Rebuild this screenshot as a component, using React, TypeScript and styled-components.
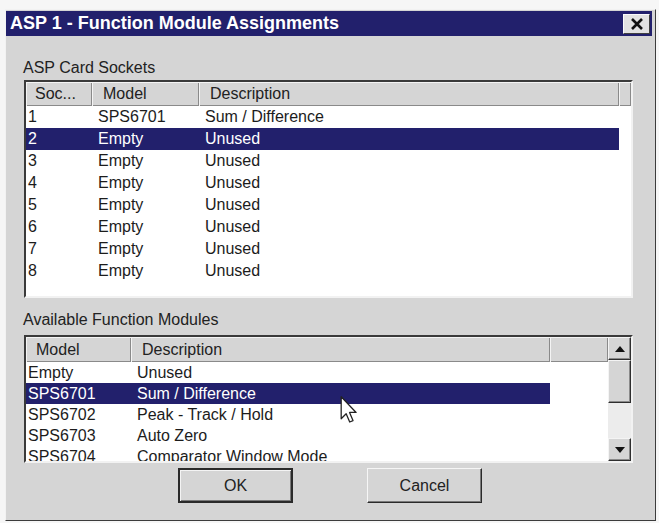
import React from 'react'
import styled, { createGlobalStyle } from 'styled-components'

const NAVY = '#22206c'
const FACE = '#d5d5d5'

const GlobalStyle = createGlobalStyle`
  html, body {
    margin: 0;
    padding: 0;
    background: #f6f6f6;
  }
  body {
    font-family: 'Liberation Sans', Arial, sans-serif;
  }
`

const Window = styled.div`
  box-sizing: border-box;
  width: 651px;
  height: 512px;
  margin: 9px 0 0 5px;
  background: ${FACE};
  border: 1px solid;
  border-color: #f2f2f2 #3c3c3c #3c3c3c #f2f2f2;
  padding: 1px 3px 0 0;
  display: flex;
  flex-direction: column;
`

const TitleBar = styled.div`
  height: 25px;
  flex-shrink: 0;
  display: flex;
  align-items: center;
  justify-content: space-between;
  background: ${NAVY};
  color: #fff;
  font-weight: bold;
  font-size: 18px;
  padding-left: 4px;
`

const CloseButton = styled.div`
  box-sizing: border-box;
  width: 27px;
  height: 20px;
  margin-right: 2px;
  display: flex;
  align-items: center;
  justify-content: center;
  background: #e2e2e2;
  border: 1px solid;
  border-color: #fafafa #404040 #404040 #fafafa;
`

const Body = styled.div`
  display: flex;
  flex-direction: column;
  padding: 0 19px 0 18px;
`

const GroupLabel = styled.div<{ $gap: number }>`
  margin-top: ${(p) => p.$gap}px;
  margin-left: -1px;
  font-size: 16px;
  line-height: 18px;
  color: #222;
`

const ListBox = styled.div<{ $height: number; $gap: number }>`
  position: relative;
  box-sizing: border-box;
  height: ${(p) => p.$height}px;
  margin-top: ${(p) => p.$gap}px;
  background: #fff;
  border: 2px solid;
  border-color: #3a3a3a #f2f2f2 #f2f2f2 #3a3a3a;
  overflow: hidden;
  display: flex;
`

const ListContent = styled.div`
  flex: 1;
  min-width: 0;
  display: flex;
  flex-direction: column;
`

const Header = styled.div<{ $height: number }>`
  display: flex;
  flex-shrink: 0;
  height: ${(p) => p.$height}px;
  background: ${FACE};
`

const HeaderCell = styled.div<{ $width?: number; $pad?: number }>`
  box-sizing: border-box;
  ${(p) => (p.$width ? `width: ${p.$width}px;` : 'flex: 1;')}
  padding-left: ${(p) => p.$pad ?? 11}px;
  display: flex;
  align-items: center;
  font-size: 16px;
  color: #222;
  white-space: nowrap;
  overflow: hidden;
  box-shadow: inset 1px 1px #f4f4f4, inset -1px -1px #8a8a8a;
`

const Row = styled.div<{ $height: number; $selected?: boolean }>`
  display: flex;
  flex-shrink: 0;
  align-self: flex-start;
  height: ${(p) => p.$height}px;
  line-height: ${(p) => p.$height}px;
  font-size: 16px;
  background: ${(p) => (p.$selected ? NAVY : 'transparent')};
  color: ${(p) => (p.$selected ? '#fff' : '#1c1c1c')};
`

const Cell = styled.div<{ $width: number; $first?: boolean }>`
  box-sizing: border-box;
  width: ${(p) => p.$width}px;
  padding-left: ${(p) => (p.$first ? 2 : 6)}px;
  white-space: nowrap;
  overflow: hidden;
`

const ScrollBar = styled.div`
  width: 23px;
  flex-shrink: 0;
  display: flex;
  flex-direction: column;
  background: #ececec;
`

const ScrollPart = styled.div<{ $height: number }>`
  box-sizing: border-box;
  height: ${(p) => p.$height}px;
  display: flex;
  align-items: center;
  justify-content: center;
  background: ${FACE};
  border: 1px solid;
  border-color: #f4f4f4 #2e2e2e #2e2e2e #f4f4f4;
  box-shadow: inset -1px -1px #8a8a8a;
`

const Track = styled.div`
  flex: 1;
  background: #ececec;
`

const Pointer = styled.svg`
  position: absolute;
  left: 314px;
  top: 59px;
`

const ButtonRow = styled.div`
  display: flex;
  justify-content: center;
  gap: 74px;
  margin-top: 5px;
  padding-left: 3px;
`

const PushButton = styled.div<{ $default?: boolean }>`
  box-sizing: border-box;
  width: 115px;
  height: 35px;
  display: flex;
  align-items: center;
  justify-content: center;
  font-size: 16px;
  color: #222;
  background: ${FACE};
  border: ${(p) => (p.$default ? 2 : 1)}px solid;
  border-color: ${(p) =>
    p.$default ? '#2a2a2a' : '#f6f6f6 #2a2a2a #2a2a2a #f6f6f6'};
  box-shadow: ${(p) =>
    p.$default
      ? 'inset 1px 1px #f4f4f4, inset -1px -1px #7a7a7a'
      : 'inset -1px -1px #7a7a7a'};
`

const sockets = [
  ['1', 'SPS6701', 'Sum / Difference'],
  ['2', 'Empty', 'Unused'],
  ['3', 'Empty', 'Unused'],
  ['4', 'Empty', 'Unused'],
  ['5', 'Empty', 'Unused'],
  ['6', 'Empty', 'Unused'],
  ['7', 'Empty', 'Unused'],
  ['8', 'Empty', 'Unused'],
]

const modules = [
  ['Empty', 'Unused'],
  ['SPS6701', 'Sum / Difference'],
  ['SPS6702', 'Peak - Track / Hold'],
  ['SPS6703', 'Auto Zero'],
  ['SPS6704', 'Comparator Window Mode'],
]

const socketCols = [66, 107, 420]
const moduleCols = [105, 419]

const Arrow = ({ up }: { up?: boolean }) => (
  <svg width='10' height='6' viewBox='0 0 10 6'>
    <path d={up ? 'M5 0 L10 6 L0 6 Z' : 'M0 0 L10 0 L5 6 Z'} fill='#111' />
  </svg>
)

export default function App() {
  return (
    <>
      <GlobalStyle />
      <Window>
        <TitleBar>
          <span>ASP 1 - Function Module Assignments</span>
          <CloseButton>
            <svg width='14' height='12' viewBox='0 0 14 12'>
              <path d='M2 1 L12 11 M12 1 L2 11' stroke='#111' strokeWidth='2.6' />
            </svg>
          </CloseButton>
        </TitleBar>
        <Body>
          <GroupLabel $gap={23}>ASP Card Sockets</GroupLabel>
          <ListBox $height={218} $gap={3}>
            <ListContent>
              <Header $height={24}>
                <HeaderCell $width={66} $pad={9}>
                  Soc...
                </HeaderCell>
                <HeaderCell $width={107}>Model</HeaderCell>
                <HeaderCell $width={420}>Description</HeaderCell>
                <HeaderCell />
              </Header>
              {sockets.map((row, i) => (
                <Row key={row[0]} $height={22} $selected={i === 1}>
                  {row.map((text, c) => (
                    <Cell key={c} $width={socketCols[c]} $first={c === 0}>
                      {text}
                    </Cell>
                  ))}
                </Row>
              ))}
            </ListContent>
          </ListBox>

          <GroupLabel $gap={13}>Available Function Modules</GroupLabel>
          <ListBox $height={128} $gap={6}>
            <ListContent>
              <Header $height={25}>
                <HeaderCell $width={105} $pad={10}>
                  Model
                </HeaderCell>
                <HeaderCell $width={419}>Description</HeaderCell>
                <HeaderCell />
              </Header>
              {modules.map((row, i) => (
                <Row key={row[0]} $height={21} $selected={i === 1}>
                  {row.map((text, c) => (
                    <Cell key={c} $width={moduleCols[c]} $first={c === 0}>
                      {text}
                    </Cell>
                  ))}
                </Row>
              ))}
            </ListContent>
            <ScrollBar>
              <ScrollPart $height={23}>
                <Arrow up />
              </ScrollPart>
              <ScrollPart $height={43} />
              <Track />
              <ScrollPart $height={23}>
                <Arrow />
              </ScrollPart>
            </ScrollBar>
            <Pointer width='18' height='27' viewBox='0 0 12 19'>
              <path
                d='M0.5 0.5 L0.5 16 L4 12.5 L6.5 18.3 L8.8 17.3 L6.4 11.6 L11 11.6 Z'
                fill='#fff'
                stroke='#222'
                strokeWidth='0.9'
                strokeLinejoin='round'
              />
            </Pointer>
          </ListBox>

          <ButtonRow>
            <PushButton $default>OK</PushButton>
            <PushButton>Cancel</PushButton>
          </ButtonRow>
        </Body>
      </Window>
    </>
  )
}
